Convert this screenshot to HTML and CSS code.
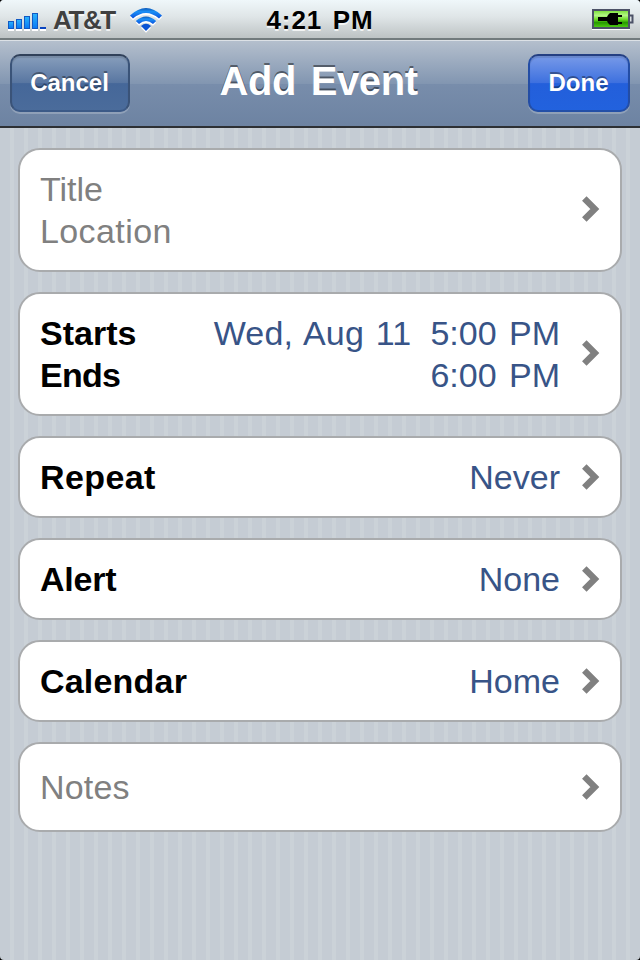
FILE: index.html
```html
<!DOCTYPE html>
<html lang="en">
<head>
<meta charset="utf-8">
<title>Add Event</title>
<link rel="stylesheet" href="styles.css">
</head>
<body>
<svg class="defs" width="0" height="0" aria-hidden="true">
  <symbol id="chevron" viewBox="0 0 18 26"><path d="M2.300 2.500 L12.800 13 L2.300 23.500" fill="none" stroke="#808080" stroke-width="6.400"/></symbol>
</svg>
<div class="screen">
  <header class="status">
    <div class="status-left">
      <svg class="signal" width="38" height="20" viewBox="0 0 38 20">
        <defs><linearGradient id="bar" x1="0" y1="0" x2="0" y2="1"><stop offset="0" stop-color="#2bb4fc"/><stop offset="1" stop-color="#0878f4"/></linearGradient></defs>
        <path d="M0 17h6v2H0zM8 17h6v2H8zM16 17h6v2h-6zM24 17h6v2h-6zM32 17h6v2h-6z" fill="#fff"/>
        <g fill="url(#bar)" stroke="#1159c4" stroke-width="1">
          <rect x=".5" y="9.500" width="5" height="7"/><rect x="8.500" y="7.500" width="5" height="9"/><rect x="16.500" y="4.500" width="5" height="12"/><rect x="24.500" y="1.500" width="5" height="15"/>
        </g>
        <rect x="32" y="15" width="6" height="2" fill="#0a45c0"/>
      </svg>
      <span class="carrier">AT&amp;T</span>
      <svg class="wifi" width="34" height="27" viewBox="0 0 34 27">
        <defs><linearGradient id="wave" x1="0" y1="0" x2="0" y2="1"><stop offset="0" stop-color="#0b58b8"/><stop offset=".35" stop-color="#1b90f6"/><stop offset="1" stop-color="#0a50dc"/></linearGradient></defs>
        <g fill="#fff" transform="translate(0 1.800)">
          <path d="M1 8.500 Q17 -6.500 33 8.500 L30 11.500 Q17 .5 4 11.500Z"/>
          <path d="M6.800 14 Q17 5 27.200 14 L24 17 Q17 11 10 17Z"/>
          <path d="M12 19 Q17 14.500 22 19 L17 24Z"/>
        </g>
        <path d="M1 8.500 Q17 -6.500 33 8.500 L30 11.500 Q17 .5 4 11.500Z" fill="url(#wave)"/>
        <path d="M6.800 14 Q17 5 27.200 14 L24 17 Q17 11 10 17Z" fill="url(#wave)"/>
        <path d="M12 19 Q17 14.500 22 19 L17 24Z" fill="#0a54d4"/>
      </svg>
    </div>
    <span class="clock">4:21 PM</span>
    <svg class="battery" width="44" height="24" viewBox="0 0 44 24">
      <defs><linearGradient id="charge" x1="0" y1="0" x2="0" y2="1"><stop offset="0" stop-color="#72dc2e"/><stop offset=".3" stop-color="#b4f785"/><stop offset=".55" stop-color="#63d51c"/><stop offset=".7" stop-color="#269800"/><stop offset="1" stop-color="#55d614"/></linearGradient></defs>
      <path d="M0 21h38" stroke="#fff" stroke-width="2"/>
      <rect x="1" y="2" width="36" height="18" fill="url(#charge)" stroke="#4c5267" stroke-width="2"/>
      <path d="M38 7.500h2.500v7H38" fill="#dce1e4" stroke="#4c5267" stroke-width="2"/>
      <path d="M6 9h9l1-2 2-2h8v2h4v2h-4v5h4v2h-4v1h-8l-2-2-1-2H6z" fill="#000"/>
    </svg>
  </header>
  <nav class="navbar">
    <button class="btn cancel">Cancel</button>
    <h1 class="title">Add Event</h1>
    <button class="btn done">Done</button>
  </nav>
  <main class="form">
    <section class="card double">
      <div class="labels hint"><span>Title</span><span class="loose">Location</span></div>
      <svg class="chevron"><use href="#chevron"/></svg>
    </section>
    <section class="card double">
      <div class="labels"><span>Starts</span><span class="tight">Ends</span></div>
      <div class="values"><span><span class="date">Wed, Aug 11</span><span class="time">5:00 PM</span></span><span class="time">6:00 PM</span></div>
      <svg class="chevron"><use href="#chevron"/></svg>
    </section>
    <section class="card">
      <div class="labels"><span class="loose">Repeat</span></div><div class="values"><span>Never</span></div>
      <svg class="chevron"><use href="#chevron"/></svg>
    </section>
    <section class="card">
      <div class="labels"><span class="snug">Alert</span></div><div class="values"><span>None</span></div>
      <svg class="chevron"><use href="#chevron"/></svg>
    </section>
    <section class="card">
      <div class="labels"><span class="airy">Calendar</span></div><div class="values"><span>Home</span></div>
      <svg class="chevron"><use href="#chevron"/></svg>
    </section>
    <section class="card notes">
      <div class="labels hint"><span class="airy">Notes</span></div>
      <svg class="chevron"><use href="#chevron"/></svg>
    </section>
  </main>
</div>
</body>
</html>
```
FILE: styles.css
```css
* { box-sizing: border-box; }
body { margin: 0; background: #000; font-family: "Liberation Sans", Arial, sans-serif; }
.defs { position: absolute; }
.screen {
  width: 640px; height: 960px; overflow: hidden; border-radius: 4px;
  background: repeating-linear-gradient(90deg, #c5ccd4 0 10px, #cbd2d8 10px 14px);
}
.status {
  height: 40px; display: grid; grid-template-columns: 1fr auto 1fr; align-items: start;
  border-bottom: 2px solid #727b7d;
  background: linear-gradient(#eff7fa, #dfe5e7 45%, #bdc3c4);
  font-size: 26px; font-weight: bold; line-height: 30px; text-shadow: 0 2px 0 rgba(255,255,255,.75);
}
.status-left { display: flex; padding-left: 8px; }
.signal { margin-top: 12px; }
.carrier { margin: 5px 0 0 7px; color: #404040; letter-spacing: -1.4px; width: 64px; white-space: nowrap; }
.wifi { margin: 7px 0 0 12px; }
.clock { margin-top: 5px; letter-spacing: .9px; word-spacing: 2.5px; }
.battery { justify-self: end; margin: 8px 4px 0 0; }
.navbar {
  height: 88px; padding: 12px 10px 0; display: grid; grid-template-columns: 120px 1fr 102px; align-items: center; align-content: start;
  border-top: 1px solid #dce1e6; border-bottom: 2px solid #2d3034;
  background: linear-gradient(#b4bfcd, #8296b1 50%, #788dab 51%, #6d83a2);
}
.btn {
  height: 58px; margin: 1px 0 0; padding: 0 1px 0 0; border: 2px solid; border-radius: 10px;
  color: #fff; font: bold 24px/30px "Liberation Sans", Arial, sans-serif;
  text-shadow: 0 -2px 0 rgba(0,0,0,.35); box-shadow: 0 2px 0 rgba(255,255,255,.22), inset 0 2px 1px rgba(0,0,0,.12);
}
.cancel { border-color: #30415a #3a5378 #3c5a87; background: linear-gradient(#8ba1be, #5876a1 50%, #456799 51%, #4b6c9b); background-origin: border-box; }
.done { border-color: #243f82 #234da5 #234fa7; background: linear-gradient(#7c9de9, #3d70df 50%, #235fdb 51%, #2262de); background-origin: border-box; }
.title { margin: 0 0 4px; text-align: center; font-size: 40px; line-height: 48px; color: #fff; letter-spacing: -.4px; word-spacing: 4px; text-shadow: 0 -2px 0 rgba(0,0,0,.45); padding-right: 21px; }
.form { padding: 20px 18px; display: flex; flex-direction: column; gap: 20px; }
.card {
  display: flex; align-items: center; padding: 18px 20px; border: 2px solid #a9abad; border-radius: 22px; background: #fff;
  font-size: 34px; line-height: 42px;
}
.notes { padding-block: 22px; }
.labels, .values { display: flex; flex-direction: column; white-space: pre; }
.labels { font-weight: bold; }
.hint { font-weight: normal; color: #808080; }
.loose { letter-spacing: .4px; }
.airy { letter-spacing: .2px; }
.snug { letter-spacing: -.2px; }
.tight { letter-spacing: -.7px; }
.values { margin-left: auto; align-items: flex-end; color: #385487; }
.date { margin-right: 19px; letter-spacing: .2px; word-spacing: 2px; }
.time { word-spacing: 3px; }
.chevron { width: 18px; height: 26px; flex: none; margin-left: 22px; }
.hint + .chevron { margin-left: auto; }
.double .chevron { margin-bottom: 2px; }
```
